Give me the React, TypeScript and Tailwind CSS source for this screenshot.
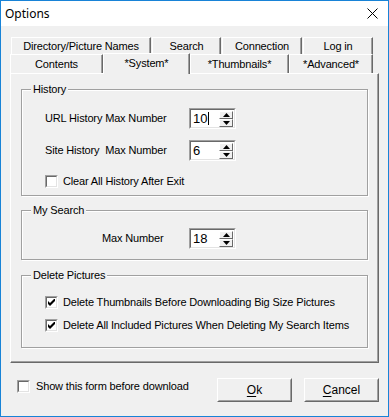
import React from "react";

const ui = "font-['Liberation_Sans',Arial,sans-serif] text-[11px] leading-[13px] tracking-[-0.15px] text-black";

function Tab({ label, w, selected }: { label: string; w: number; selected?: boolean }) {
  if (selected) {
    return (
      <div
        style={{ width: w }}
        className="relative z-10 -mb-px flex h-[21px] items-start justify-center border-l border-t border-r border-l-white border-t-white border-r-[#696969] bg-[#f0f0f0] pt-[3px] shadow-[inset_-1px_0_0_#a0a0a0]"
      >
        {label}
      </div>
    );
  }
  return (
    <div
      style={{ width: w }}
      className="flex h-[19px] items-center justify-center border-l border-t border-r border-l-white border-t-white border-r-[#696969] bg-[#f0f0f0] shadow-[inset_-1px_0_0_#a0a0a0]"
    >
      {label}
    </div>
  );
}

function SpinButton({ up }: { up?: boolean }) {
  return (
    <div className="flex h-[8px] w-[14px] items-center justify-center border border-t-white border-l-white border-r-[#696969] border-b-[#696969] bg-[#f0f0f0]">
      <svg width="7" height="4" viewBox="0 0 7 4">
        {up ? <path d="M3.5 0 L7 4 L0 4 Z" fill="#000" /> : <path d="M0 0 L7 0 L3.5 4 Z" fill="#000" />}
      </svg>
    </div>
  );
}

function Spinner({ value, caret }: { value: string; caret?: boolean }) {
  return (
    <div className="flex h-[21px] w-[47px] border border-t-[#a0a0a0] border-l-[#a0a0a0] border-b-white border-r-white">
      <div className="flex flex-1 border border-t-[#696969] border-l-[#696969] border-b-[#e3e3e3] border-r-[#e3e3e3] bg-white">
        <div className="flex flex-1 items-center pl-[2px] text-[13px] leading-none tracking-normal">
          {value}
          {caret && <span className="ml-px h-[13px] w-px bg-black" />}
        </div>
        <div className="flex flex-col justify-center pr-px">
          <SpinButton up />
          <SpinButton />
        </div>
      </div>
    </div>
  );
}

function CheckBox({ checked }: { checked?: boolean }) {
  return (
    <span className="block h-[13px] w-[13px] shrink-0 border border-t-[#a0a0a0] border-l-[#a0a0a0] border-b-white border-r-white">
      <span className="flex h-full w-full items-center justify-center border border-t-[#696969] border-l-[#696969] border-b-[#e3e3e3] border-r-[#e3e3e3] bg-white">
        {checked && (
          <svg width="7" height="7" viewBox="0 0 7 7">
            <path d="M0 2 L2 4 L7 -1 L7 2 L2 7 L0 5 Z" fill="#000" />
          </svg>
        )}
      </span>
    </span>
  );
}

function Group({ title, className, children }: { title: string; className?: string; children: React.ReactNode }) {
  return (
    <div className={"relative border border-[#a0a0a0] shadow-[inset_1px_1px_0_#fff,1px_1px_0_#fff] " + (className ?? "")}>
      <span className="absolute -top-[7px] left-[9px] bg-[#f0f0f0] px-[2px] leading-[13px]">{title}</span>
      {children}
    </div>
  );
}

function Button({ accel, rest }: { accel: string; rest: string }) {
  return (
    <div className="flex h-[24px] w-[75px] border border-t-white border-l-white border-r-[#696969] border-b-[#696969]">
      <div className="flex flex-1 items-center justify-center border border-transparent border-r-[#a0a0a0] border-b-[#a0a0a0] text-[12px] tracking-normal">
        <span className="underline underline-offset-[2px]">{accel}</span>
        {rest}
      </div>
    </div>
  );
}

export default function App() {
  return (
    <div className={"flex h-[417px] w-[389px] flex-col border border-[#1883d7] bg-[#f0f0f0] " + ui}>
      <div className="flex h-[25px] shrink-0 items-center justify-between bg-white pl-[4px] pr-[10px]">
        <span className="font-['Noto_Sans',sans-serif] text-[12px] tracking-normal">Options</span>
        <svg width="11" height="11" viewBox="0 0 11 11">
          <path d="M0.5 0.5 L10.5 10.5 M10.5 0.5 L0.5 10.5" stroke="#000" strokeWidth="1" />
        </svg>
      </div>

      <div className="mt-[11px] pl-[9px]">
        <div className="ml-px flex gap-px">
          <div style={{ width: 140 }} className="flex h-[17px] items-center justify-center border-l border-t border-r border-l-white border-t-white border-r-[#696969] shadow-[inset_-1px_0_0_#a0a0a0]">Directory/Picture Names</div>
          <div style={{ width: 69 }} className="flex h-[17px] items-center justify-center border-l border-t border-r border-l-white border-t-white border-r-[#696969] shadow-[inset_-1px_0_0_#a0a0a0]">Search</div>
          <div style={{ width: 80 }} className="flex h-[17px] items-center justify-center border-l border-t border-r border-l-white border-t-white border-r-[#696969] shadow-[inset_-1px_0_0_#a0a0a0]">Connection</div>
          <div style={{ width: 70 }} className="flex h-[17px] items-center justify-center border-l border-t border-r border-l-white border-t-white border-r-[#696969] shadow-[inset_-1px_0_0_#a0a0a0]">Log in</div>
        </div>
        <div className="flex h-[19px] items-end">
          <Tab label="Contents" w={93} />
          <Tab label="*System*" w={87} selected />
          <Tab label="*Thumbnails*" w={99} />
          <Tab label="*Advanced*" w={84} />
        </div>

        <div className="flex h-[290px] w-[369px] flex-col border border-t-white border-l-white border-r-[#696969] border-b-[#696969] shadow-[inset_-1px_-1px_0_#a0a0a0] px-[10px] pt-[15px]">
          <Group title="History" className="pl-[23px] pt-[18px] pb-[7px]">
            <div className="flex items-center">
              <span className="w-[144px]">URL History Max Number</span>
              <Spinner value="10" caret />
            </div>
            <div className="mt-[11px] flex items-center">
              <span className="w-[144px]">Site History&nbsp; Max Number</span>
              <Spinner value="6" />
            </div>
            <div className="mt-[14px] flex items-center gap-[5px]">
              <CheckBox />
              <span>Clear All History After Exit</span>
            </div>
          </Group>

          <Group title="My Search" className="mt-[14px] pl-[80px] pt-[17px] pb-[10px]">
            <div className="flex items-center">
              <span className="w-[87px]">Max Number</span>
              <Spinner value="18" />
            </div>
          </Group>

          <Group title="Delete Pictures" className="mt-[15px] pl-[23px] pt-[20px] pb-[15px]">
            <div className="flex items-center gap-[5px]">
              <CheckBox checked />
              <span>Delete Thumbnails Before Downloading Big Size Pictures</span>
            </div>
            <div className="mt-[10px] flex items-center gap-[5px]">
              <CheckBox checked />
              <span>Delete All Included Pictures When Deleting My Search Items</span>
            </div>
          </Group>
        </div>
      </div>

      <div className="mt-[15px] flex items-start pl-[16px] pr-[9px]">
        <div className="mt-[2px] flex flex-1 items-center gap-[6px]">
          <CheckBox />
          <span>Show this form before download</span>
        </div>
        <Button accel="O" rest="k" />
        <div className="w-[12px]" />
        <Button accel="C" rest="ancel" />
      </div>
    </div>
  );
}
